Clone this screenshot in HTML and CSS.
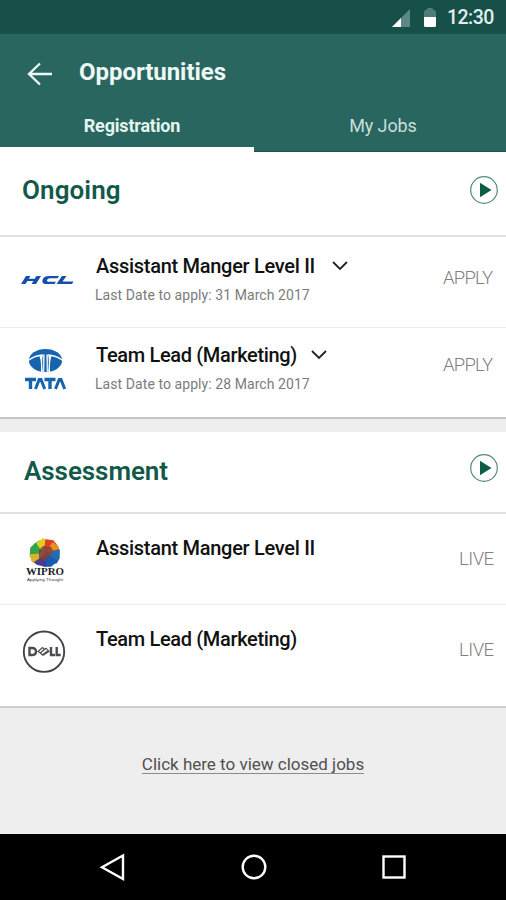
FILE: index.html
```html
<!DOCTYPE html>
<html lang="en">
<head>
<meta charset="utf-8">
<title>Opportunities</title>
<link rel="stylesheet" href="styles.css">
</head>
<body>
<div class="statusbar">
  <svg class="signal" width="18" height="18" viewBox="0 0 18 18"><path d="M18 0V18H0Z" fill="#5d8782"/><path d="M9 9V18H0Z" fill="#fff"/></svg>
  <svg class="battery" width="12" height="20" viewBox="0 0 12 20"><path d="M0 9V4Q0 2.500 2 2L4 0H8L10 2Q12 2.500 12 4V9Z" fill="#4d7d76"/><path d="M0 9H12V17.500Q12 19 10.500 19H1.500Q0 19 0 17.500Z" fill="#fff"/></svg>
  <span class="clock">12:30</span>
</div>
<header class="appbar">
  <div class="title-row">
    <svg class="back" width="26" height="24" viewBox="0 0 26 24"><path d="M25 12H2M13 1.500L2 12L13 22.500" fill="none" stroke="#eef8f5" stroke-width="2.300"/></svg>
    <h1 class="title">Opportunities</h1>
  </div>
  <nav class="tabs">
    <div class="tab active"><span class="tab-text">Registration</span></div>
    <div class="tab"><span class="tab-text">My Jobs</span></div>
  </nav>
</header>
<main class="content">
  <section class="card ongoing">
    <div class="card-head">
      <h2 class="heading">Ongoing</h2>
      <svg class="play" width="30" height="30" viewBox="0 0 30 30"><circle cx="15" cy="15" r="13.300" fill="#fff" stroke="#55897d" stroke-width="1.200"/><path d="M11 7.800L22.500 15L11 22.200Z" fill="#0d5c4a"/></svg>
    </div>
    <div class="row">
      <div class="logo"><svg width="54" height="44" viewBox="0 0 54 44"><g fill="#174fa8"><path d="M4 19H8.500L6.700 21.800H12.700L14.500 19H19L14 27H9.500L11.400 24H5.400L3.500 27H-1Z"/><path d="M37 19L35.500 21.200H28Q25.500 21.200 25 23Q24.500 24.800 27 24.800H34L32.500 27H24Q19.500 27 20.500 23Q21.500 19 27 19Z"/><path d="M40 19H44.500L40.500 24.500H51.500L50 27H34.500Z"/></g></svg></div>
      <div class="details">
        <h3 class="job"><span class="level">Assistant Manger Level II</span><svg class="chevron" width="16" height="10" viewBox="0 0 16 10"><path d="M1 1L8 8L15 1" fill="none" stroke="#222" stroke-width="1.800"/></svg></h3>
        <p class="date">Last Date to apply: 31 March 2017</p>
      </div>
      <span class="action apply">APPLY</span>
    </div>
    <div class="row second">
      <div class="logo"><svg width="54" height="44" viewBox="0 0 54 44"><ellipse cx="23.500" cy="12.500" rx="16.600" ry="11.500" fill="#1664ad"/><path d="M6.500 11.500Q13 6.500 21 6.200Q19 14 21 25H19Q19.500 13 17.500 8.300Q12 9 6.500 13ZM40.500 11.500Q34 6.500 26 6.200Q28 14 26 25H28Q27.500 13 29.500 8.300Q35 9 40.500 13Z" fill="#fff"/><path d="M21 6.500H22.700L22.300 25H20.500ZM26 6.500H24.300L24.700 25H26.500Z" fill="#dbe8f4"/><g fill="none" stroke="#1664ad" stroke-width="3.400"><path d="M3 31.500H14M8.500 31V41M22.500 31.500H33.500M28 31V41"/><path d="M13.500 41L17.200 31.500H19L22.700 41M33.500 41L37.200 31.500H39L42.700 41" stroke-width="3"/></g></svg></div>
      <div class="details">
        <h3 class="job"><span class="lead">Team Lead (Marketing)</span><svg class="chevron" width="16" height="10" viewBox="0 0 16 10"><path d="M1 1L8 8L15 1" fill="none" stroke="#222" stroke-width="1.800"/></svg></h3>
        <p class="date">Last Date to apply: 28 March 2017</p>
      </div>
      <span class="action apply">APPLY</span>
    </div>
  </section>
  <section class="card assessment">
    <div class="card-head">
      <h2 class="heading">Assessment</h2>
      <svg class="play" width="30" height="30" viewBox="0 0 30 30"><circle cx="15" cy="15" r="13.300" fill="#fff" stroke="#55897d" stroke-width="1.200"/><path d="M11 7.800L22.500 15L11 22.200Z" fill="#0d5c4a"/></svg>
    </div>
    <div class="row">
      <div class="logo"><svg width="54" height="46" viewBox="0 0 54 46">
        <g stroke-linejoin="round" stroke-width="1.500"><path d="M22.500 16L8.500 17L9 10L13 6L18 3Z" fill="#32a348" stroke="#32a348"/><path d="M22.500 16L15 5L21 1L26 3Z" fill="#ddcf23" stroke="#ddcf23"/><path d="M22.500 16L24 2L31 3L35 8Z" fill="#df3e24" stroke="#df3e24"/><path d="M22.500 16L31 5L36 9L37 14Z" fill="#ed8e22" stroke="#ed8e22"/><path d="M22.500 16L37 12V20L34 25Z" fill="#246cae" stroke="#246cae"/><path d="M22.500 16L35 23L29 28H22Z" fill="#165bb0" stroke="#165bb0"/><path d="M22.500 16L23 28L15 26L10 22Z" fill="#493b91" stroke="#493b91"/><path d="M22.500 16L11 24L8 17Z" fill="#d9b42b" stroke="#d9b42b"/></g>
        <path d="M17 12L21 8L29 9L31 13L27 19L22 23L17 20Z" fill="#713c43" opacity=".8"/><path d="M17 17L28 8M20 21L32 12" stroke="#b44429" stroke-width="2" opacity=".6"/>
        <text class="wipro" x="4" y="36.500" textLength="38" lengthAdjust="spacingAndGlyphs">WIPRO</text><text class="motto" x="5" y="42.500" textLength="36" lengthAdjust="spacingAndGlyphs">Applying Thought</text></svg></div>
      <div class="details"><h3 class="job"><span class="level">Assistant Manger Level II</span></h3></div>
      <span class="action live">LIVE</span>
    </div>
    <div class="row second">
      <div class="logo"><svg width="54" height="44" viewBox="0 0 54 44"><circle cx="22" cy="21.700" r="20.200" fill="none" stroke="#414548" stroke-width="1.900"/><g fill="none" stroke="#484b50" stroke-width="2.400"><path d="M7.500 18H10Q14 18 14 21.500Q14 25 10 25H7.500Z"/><path d="M16 21.500L20.500 17.500L22.500 19.200L18.300 23ZM18.300 23L20.500 25L25.500 21M20 21.500L24 18.200L27 21.300L21 25.200" stroke-width="1.200"/><path d="M29 17V25H33M34.700 17V25H38.700"/></g></svg></div>
      <div class="details"><h3 class="job"><span class="lead">Team Lead (Marketing)</span></h3></div>
      <span class="action live">LIVE</span>
    </div>
  </section>
  <div class="closed"><a class="closed-link">Click here to view closed jobs</a></div>
</main>
<footer class="navbar">
  <svg width="28" height="28" viewBox="0 0 28 28"><path d="M24 2.500V26L3 14.300Z"/></svg>
  <svg width="28" height="28" viewBox="0 0 28 28"><circle cx="14" cy="14" r="11.300"/></svg>
  <svg width="28" height="28" viewBox="0 0 28 28"><rect x="3.500" y="3.500" width="21" height="21"/></svg>
</footer>
</body>
</html>
```

FILE: styles.css
```css
* { box-sizing: border-box; }
body {
  margin: 0;
  width: 506px;
  height: 900px;
  display: flex;
  flex-direction: column;
  overflow: hidden;
  background: #eee;
  font-family: Roboto, "Liberation Sans", sans-serif;
}
h1, h2, h3, p { margin: 0; }
svg { display: block; flex: none; overflow: visible; }
.statusbar {
  height: 34px;
  display: flex;
  justify-content: flex-end;
  padding: 8px 12px 0 0;
  background: #174f49;
}
.signal { margin-top: 1px; margin-right: 14px; }
.battery { margin-right: 11px; }
.clock { width: 47px; font-size: 19.5px; font-weight: 500; line-height: 19px; letter-spacing: -.55px; color: #e2eeeb; }
.appbar { height: 118px; display: flex; flex-direction: column; background: #296660; }
.title-row { height: 70px; display: flex; padding: 0 0 0 27px; }
.back { margin-top: 28px; }
.title { margin: 24px 0 0 26px; font-size: 24px; line-height: 28px; font-weight: 700; letter-spacing: -.05px; color: #eef8f5; white-space: nowrap; }
.tabs { flex: 1; display: flex; }
.tab { flex: 0 0 252px; text-align: center; padding-top: 11px; font-size: 18px; line-height: 22px; letter-spacing: -.1px; color: #c8dfda; }
.tab.active { flex-basis: 254px; padding-left: 10px; font-weight: 700; letter-spacing: -.18px; color: #e4f4ef; border-bottom: 5px solid #fdfefd; }
.tab:not(.active) { padding-left: 6px; border-bottom: 1px solid #185650; }
.content { flex: 1; }
.card { background: #fff; }
.ongoing { height: 267px; border-bottom: 2px solid #c4c4c4; }
.assessment { height: 276px; margin-top: 13px; border-bottom: 2px solid #cfcfcf; }
.card-head { height: 85px; display: flex; justify-content: space-between; padding: 23px 7px 0 22px; border-bottom: 2px solid #e1e1e1; }
.heading { font-size: 26px; line-height: 32px; font-weight: 600; color: #12594a; }
.ongoing .heading { line-height: 31px; letter-spacing: .1px; }
.assessment .card-head { height: 82px; padding-left: 24px; padding-top: 22px; }
.assessment .play { margin-top: -1px; }
.assessment .heading { line-height: 34px; letter-spacing: -.07px; }
.row { height: 91px; display: flex; padding: 0 13px 0 23px; border-bottom: 1px solid #ededed; }
.row.second { border: 0; }
.logo { width: 73px; padding-top: 20px; margin-left: -1px; }
.details { flex: 1; padding: 16px 0 0 1px; }
.job { display: flex; align-items: center; height: 26px; font-size: 20px; font-weight: 500; color: #111; white-space: nowrap; }
.level { width: 219px; letter-spacing: -.29px; }
.lead { width: 201px; letter-spacing: -.34px; }
.chevron { margin-left: 17px; }
.lead + .chevron { margin-left: 14px; }
.date { margin: 6px 0 0 -1px; font-size: 14px; line-height: 20px; letter-spacing: .07px; color: #7c7c7c; white-space: nowrap; }
.action { font-size: 18.5px; line-height: 24px; font-weight: 300; color: #808080; padding-top: 29px; white-space: nowrap; }
.apply { width: 50px; letter-spacing: -.75px; }
.live { width: 34px; letter-spacing: -.5px; }
.ongoing .second .details { padding-top: 14px; }
.ongoing .second .action { padding-top: 25px; }
.assessment .details { padding-top: 21px; }
.assessment .logo { padding-top: 24px; }
.assessment .action { padding-top: 33px; }
.assessment .second .logo { padding-top: 25px; }
.wipro { font: 700 9.5px "Liberation Serif", serif; fill: #202027; }
.motto { font: 3.8px "Liberation Sans", sans-serif; fill: #38383d; }
.closed { display: flex; justify-content: center; padding-top: 45px; }
.closed-link { height: 21px; font-size: 17px; line-height: 22px; color: #505050; border-bottom: 1px solid #8b8b8b; white-space: nowrap; }
.navbar { height: 66px; display: flex; justify-content: space-between; padding: 19px 98px 0 99px; background: #000; }
.navbar svg { fill: none; stroke: #fff; stroke-width: 2.4; }
```
